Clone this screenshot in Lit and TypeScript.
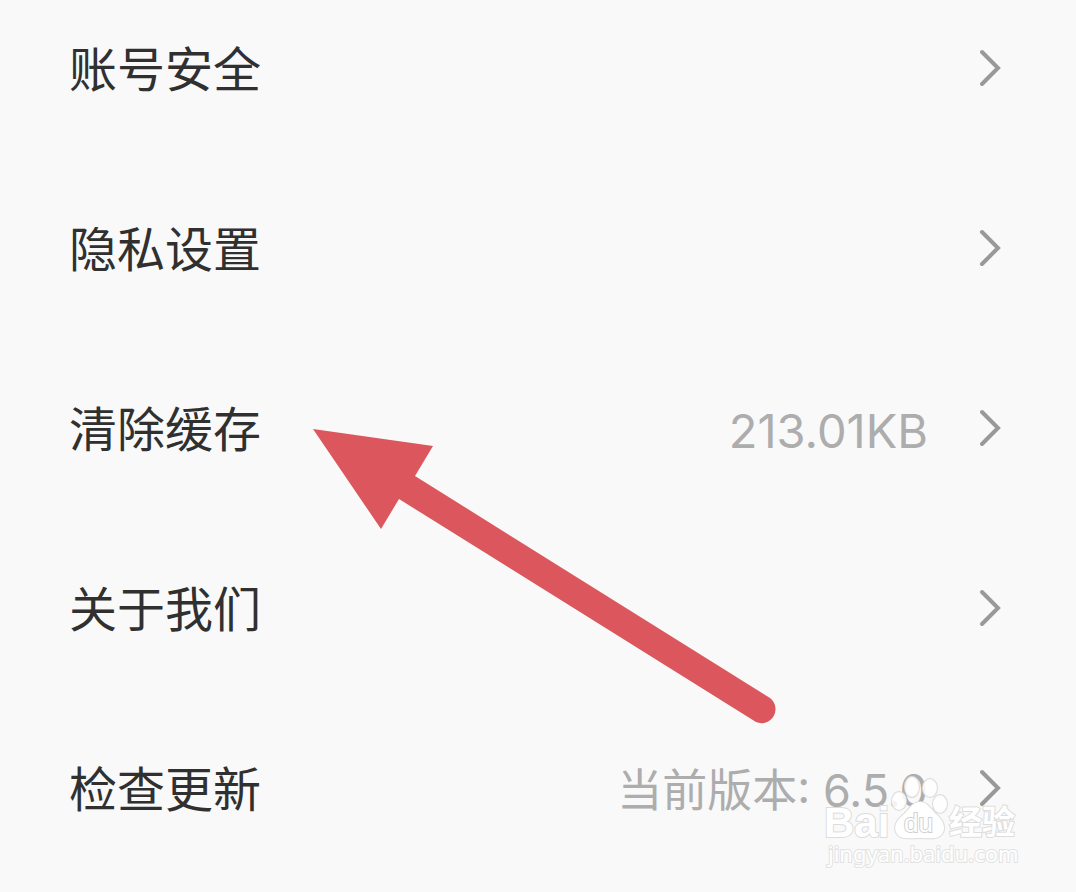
import { LitElement, html, css } from "lit";
import { customElement } from "lit/decorators.js";

interface SettingItem {
  label: string;
  value?: string;
  kind?: string;
}

const ITEMS: SettingItem[] = [
  { label: "账号安全" },
  { label: "隐私设置" },
  { label: "清除缓存", value: "213.01KB" },
  { label: "关于我们" },
  { label: "检查更新", value: "当前版本: 6.5.0", kind: "version" },
];

@customElement("app-root")
export class AppRoot extends LitElement {
  static styles = css`
    :host {
      display: block;
      min-height: 100vh;
      box-sizing: border-box;
      background: #f9f9f9;
      font-family: Inter, "Noto Sans CJK SC", sans-serif;
    }
    .page {
      position: relative;
      box-sizing: border-box;
      min-height: 100vh;
      overflow: hidden;
    }
    .list {
      display: flex;
      flex-direction: column;
      gap: 116px;
      margin: 0;
      padding: 36px 72px 0 69px;
      list-style: none;
    }
    .row {
      display: flex;
      align-items: center;
      width: 100%;
      height: 64px;
      padding: 0;
      border: 0;
      background: none;
      font: inherit;
      text-align: left;
      cursor: pointer;
    }
    .label {
      flex: 1;
      padding-top: 4px;
      font-size: 48px;
      line-height: 60px;
      color: #303030;
    }
    .value {
      margin-right: 48px;
      padding-top: 6px;
      font-size: 47px;
      line-height: 60px;
      color: #adadad;
    }
    .version {
      font-size: 45px;
    }
    .chevron {
      width: 28px;
      height: 40px;
      fill: none;
      stroke: #999;
      stroke-width: 4;
      stroke-linecap: round;
      stroke-linejoin: miter;
    }
    .arrow {
      position: absolute;
      left: 310px;
      top: 425px;
      width: 470px;
      height: 302px;
      fill: #db575d;
      pointer-events: none;
    }
    .mark {
      position: absolute;
      right: 52px;
      top: 772px;
      width: 204px;
      height: 104px;
      fill: #fff;
      stroke: #dcdcdc;
      stroke-width: 2;
      paint-order: stroke;
      pointer-events: none;
    }
    .latin {
      font: bold 42px "Liberation Sans", sans-serif;
    }
    .du {
      font: 26px "Liberation Sans", sans-serif;
      stroke: #d0d0d0;
    }
    .cjk {
      font: bold 33px "Noto Sans CJK SC", sans-serif;
    }
    .site {
      font: 22px "Noto Sans", sans-serif;
      stroke: #e2e2e2;
    }
    .toes {
      fill-opacity: 0.85;
    }
  `;

  render() {
    return html`
      <main class="page">
        <ul class="list">
          ${ITEMS.map(
            (item) => html`<li>
              <button class="row" type="button">
                <span class="label">${item.label}</span>
                ${item.value
                  ? html`<span class="value ${item.kind ?? ""}">${item.value}</span>`
                  : null}
                <svg class="chevron" viewBox="0 0 28 40" aria-hidden="true">
                  <path d="M6 4L22 20L6 36" />
                </svg>
              </button>
            </li>`
          )}
        </ul>
        <svg class="arrow" viewBox="310 425 470 302" aria-hidden="true">
          <path
            d="M313 429L433 446L415 476L770 698A14 14 0 0 1 756 722L399 499L381 529Z"
          />
        </svg>
        <svg class="mark" viewBox="820 772 204 104" role="img" aria-label="Baidu">
          <text class="latin" x="824" y="837">Bai</text>
          <g class="toes">
            <ellipse cx="899" cy="801" rx="7" ry="9" />
            <ellipse cx="912" cy="787" rx="7" ry="10" />
            <ellipse cx="930" cy="788" rx="7" ry="9" />
            <ellipse cx="940" cy="804" rx="7" ry="9" />
          </g>
          <path
            d="M920 802C928 802 931 810 937 815C944 821 946 829 942 834C938 840 929 838 920 838C911 838 901 840 897 834C893 828 896 820 903 815C909 810 912 802 920 802Z"
          />
          <text class="du" x="904" y="832">du</text>
          <text class="cjk" x="949" y="834">经验</text>
          <text class="site" x="828" y="862">jingyan.baidu.com</text>
        </svg>
      </main>
    `;
  }
}
